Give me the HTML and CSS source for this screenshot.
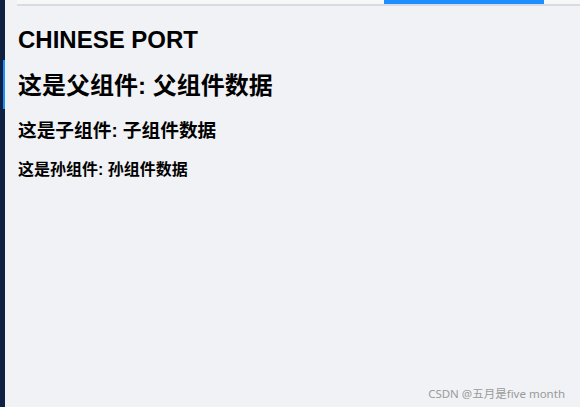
FILE: index.html
```html
<!DOCTYPE html>
<html lang="zh">
<head>
<meta charset="utf-8">
<link rel="stylesheet" href="styles.css">
</head>
<body>
<div class="app">
  <aside class="sidebar"><span class="active-mark"></span></aside>
  <main class="main">
    <div class="tabbar"><span class="tab-active"></span></div>
    <div class="content">
      <h2 class="title">CHINESE PORT</h2>
      <h2 class="parent">这是父组件: 父组件数据</h2>
      <h3 class="child">这是子组件: 子组件数据</h3>
      <h4 class="grand">这是孙组件: 孙组件数据</h4>
    </div>
  </main>
</div>
<div class="watermark">CSDN @五月是five month</div>
</body>
</html>
```
FILE: styles.css
```css
html, body {
  margin: 0;
  padding: 0;
  width: 580px;
  height: 407px;
  overflow: hidden;
  background: #f0f2f5;
  font-family: "Liberation Sans", "Noto Sans CJK SC", sans-serif;
  color: #000;
}
.app {
  display: flex;
  height: 407px;
}
.sidebar {
  width: 5px;
  background: #0e2143;
  position: relative;
  flex: none;
}
.active-mark {
  position: absolute;
  left: 3px;
  top: 60px;
  width: 2px;
  height: 49px;
  background: #1890ff;
}
.main {
  flex: 1;
  display: flex;
  flex-direction: column;
}
.tabbar {
  margin-left: 12px;
  height: 4px;
  background: #f7f7f8;
  border-bottom: 2px solid #d8dbe2;
  display: flex;
  padding-left: 367px;
}
.tab-active {
  width: 160px;
  background: #1e8fff;
}
.content {
  padding-left: 13px;
  display: flex;
  flex-direction: column;
}
.title {
  font-size: 24px;
  font-weight: bold;
  margin: 20px 0 0;
  line-height: 28px;
}
.parent {
  font-size: 24px;
  font-weight: bold;
  margin: 17px 0 0;
  line-height: 30px;
}
.child {
  font-size: 18.7px;
  font-weight: bold;
  margin: 18px 0 0;
  line-height: 24px;
}
.grand {
  font-size: 16px;
  font-weight: bold;
  margin: 16px 0 0;
  line-height: 22px;
}
.watermark {
  position: absolute;
  right: 15px;
  bottom: 6px;
  font-family: "Noto Sans", "Noto Sans CJK SC", sans-serif;
  font-size: 11.5px;
  color: #9a9a9a;
}
```
